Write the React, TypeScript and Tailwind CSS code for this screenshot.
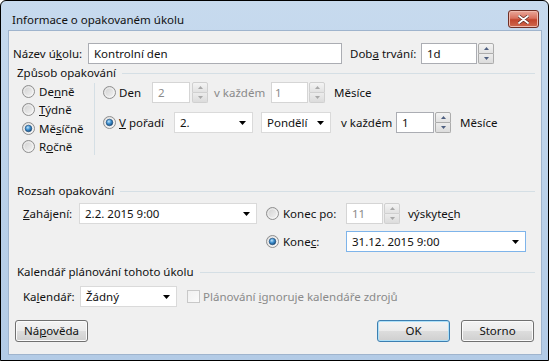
import React from "react";

const Radio = ({ checked }: { checked?: boolean }) => (
  <svg width="13" height="13" viewBox="0 0 13 13" className="shrink-0">
    <defs>
      <linearGradient id="rg" x1="0" y1="0" x2="1" y2="1">
        <stop offset="0" stopColor="#cdcdcd" />
        <stop offset="1" stopColor="#f7f7f7" />
      </linearGradient>
      <radialGradient id="rd" cx="0.4" cy="0.35" r="0.75">
        <stop offset="0" stopColor="#bfe4fb" />
        <stop offset="0.45" stopColor="#3d8fcf" />
        <stop offset="1" stopColor="#0f3c66" />
      </radialGradient>
    </defs>
    <circle cx="6.5" cy="6.5" r="6" fill="url(#rg)" stroke="#8f8f8f" />
    <circle cx="6.5" cy="6.5" r="4.6" fill="none" stroke="#ffffff" strokeOpacity="0.7" strokeWidth="0.8" />
    {checked && <circle cx="6.5" cy="6.5" r="3.3" fill="url(#rd)" stroke="#1b4a78" strokeWidth="0.6" />}
  </svg>
);

const Arrow = () => (
  <svg width="7" height="4" viewBox="0 0 7 4" className="shrink-0">
    <path d="M0 0 L7 0 L3.5 4 Z" fill="#000" />
  </svg>
);

const Spin = ({ disabled }: { disabled?: boolean }) => {
  const c = disabled ? "#a8a8a8" : "#4e5f80";
  const b = disabled ? "border-[#d0d0d0]" : "border-[#acacac]";
  return (
    <div className="flex flex-col w-[16px] h-[21px] shrink-0">
      <div className={`h-[11px] border ${b} rounded-t-[2px] bg-[linear-gradient(180deg,#f4f4f4,#e2e2e2)] flex items-center justify-center`}>
        <svg width="5" height="3" viewBox="0 0 5 3"><path d="M0 3 L2.5 0 L5 3 Z" fill={c} /></svg>
      </div>
      <div className={`h-[10px] border border-t-0 ${b} rounded-b-[2px] bg-[linear-gradient(180deg,#ececec,#dcdcdc)] flex items-center justify-center`}>
        <svg width="5" height="3" viewBox="0 0 5 3"><path d="M0 0 L5 0 L2.5 3 Z" fill={c} /></svg>
      </div>
    </div>
  );
};

const Select = ({ w, text, focus }: { w: string; text: string; focus?: boolean }) => (
  <div className={`${w} h-[21px] shrink-0 bg-white border ${focus ? "border-[#7eb4ea]" : "border-[#dadada]"} flex items-center pl-[5px] pr-[6px]`}>
    <span className="flex-1">{text}</span>
    <Arrow />
  </div>
);

const Header = ({ text }: { text: string }) => (
  <div className="h-[14px] flex items-center pl-[8px] pr-[6px]">
    <span className="whitespace-nowrap">{text}</span>
    <div className="flex-1 ml-[6px] border-t border-[#d5dfe5]" />
  </div>
);

const Btn = ({ children, def, ml }: { children: React.ReactNode; def?: boolean; ml?: string }) => (
  <div
    className={`${ml ?? ""} w-[73px] h-[22px] rounded-[3px] border ${def ? "border-[#3c7fb1] shadow-[inset_0_0_0_1px_#aee0f8]" : "border-[#707070] shadow-[inset_0_0_0_1px_#fbfbfb]"} bg-[linear-gradient(180deg,#f3f3f3_0%,#ebebeb_50%,#dddddd_50%,#cfcfcf_100%)] flex items-center justify-center`}
  >
    {children}
  </div>
);

export default function App() {
  return (
    <div
      className="w-[549px] h-[361px] border border-black rounded-t-[6px] flex flex-col bg-[linear-gradient(180deg,#c7daee_0%,#b9d0e9_60%,#b3cbe6_100%)] text-[11.5px] leading-none text-[#111] overflow-hidden"
      style={{ fontFamily: '"Segoe UI", "Noto Sans", "Open Sans", sans-serif' }}
    >
      {/* title bar */}
      <div className="h-[29px] flex items-start shrink-0">
        <div className="pl-[11px] pt-[13px] flex-1">Informace o opakovaném úkolu</div>
        <div className="mt-[9px] mr-[9px] w-[31px] h-[18px] rounded-[3px] border border-[#6f2f25] bg-[linear-gradient(180deg,#e9a89a_0%,#d9725f_45%,#c2442c_55%,#cf6a4f_100%)] shadow-[inset_0_0_0_1px_#f0b9ad] flex items-center justify-center">
          <svg width="11" height="9" viewBox="0 0 11 9">
            <path d="M1 1 L10 8 M10 1 L1 8" stroke="#5a2a22" strokeWidth="3.2" strokeLinecap="round" />
            <path d="M1 1 L10 8 M10 1 L1 8" stroke="#ffffff" strokeWidth="1.8" strokeLinecap="round" />
          </svg>
        </div>
      </div>

      <div className="flex flex-1">
        <div className="w-[7px] shrink-0" />
        {/* client */}
        <div className="w-[534px] h-[325px] border border-[#9fb4cd] bg-[#f0f0f0] flex flex-col">
          {/* row 1 */}
          <div className="mt-[12px] h-[21px] flex items-center pl-[4px]">
            <span className="w-[75px] shrink-0">
              Název ú<u>k</u>olu:
            </span>
            <div className="w-[254px] h-[21px] bg-white border border-[#abadb3] flex items-center pl-[5px]">Kontrolní den</div>
            <span className="ml-[8px] w-[71px] shrink-0">
              Dob<u>a</u> trvání:
            </span>
            <div className="w-[56px] h-[21px] bg-white border border-[#abadb3] flex items-center pl-[5px]">1d</div>
            <div className="ml-[1px]">
              <Spin />
            </div>
          </div>

          <div className="mt-[2px]">
            <Header text="Způsob opakování" />
          </div>

          {/* section 1 body */}
          <div className="h-[76px] flex">
            <div className="w-[85px] shrink-0 pl-[13px] pt-[2px] flex flex-col">
              {[
                ["De", "n", "ně", false],
                ["", "T", "ýdně", false],
                ["Mě", "s", "íčně", true],
                ["R", "o", "čně", false],
              ].map(([a, u, b, c], i) => (
                <div key={i} className="h-[19px] flex items-center">
                  <Radio checked={c as boolean} />
                  <span className="ml-[4px]">
                    {a as string}
                    <u>{u as string}</u>
                    {b as string}
                  </span>
                </div>
              ))}
            </div>
            <div className="w-px mt-[3px] h-[72px] bg-[#d5dfe5]" />
            <div className="flex flex-col pl-[8px] pt-[2px]">
              <div className="h-[21px] flex items-center">
                <div className="w-[49px] shrink-0 flex items-center">
                  <Radio />
                  <span className="ml-[3px]">Den</span>
                </div>
                <div className="w-[38px] h-[21px] bg-white border border-[#d5d5d5] flex items-center pl-[5px] text-[#8a8a8a]">2</div>
                <div className="ml-[2px]">
                  <Spin disabled />
                </div>
                <span className="ml-[6px] w-[57px] shrink-0 text-[#8a8a8a]">v každém</span>
                <div className="w-[37px] h-[21px] bg-white border border-[#d5d5d5] flex items-center pl-[3px] text-[#8a8a8a]">1</div>
                <div className="ml-[1px]">
                  <Spin disabled />
                </div>
                <span className="ml-[9px]">Měsíce</span>
              </div>
              <div className="mt-[9px] h-[21px] flex items-center">
                <div className="w-[71px] shrink-0 flex items-center">
                  <Radio checked />
                  <span className="ml-[3px]">
                    <u>V</u> pořadí
                  </span>
                </div>
                <Select w="w-[79px]" text="2." />
                <div className="ml-[8px]">
                  <Select w="w-[70px]" text="Pondělí" />
                </div>
                <span className="ml-[10px] w-[55px] shrink-0">v každém</span>
                <div className="w-[38px] h-[21px] bg-white border border-[#abadb3] flex items-center pl-[5px]">1</div>
                <div className="ml-[1px]">
                  <Spin />
                </div>
                <span className="ml-[9px]">Měsíce</span>
              </div>
            </div>
          </div>

          <div className="mt-[28px]">
            <Header text="Rozsah opakování" />
          </div>

          <div className="mt-[5px] h-[21px] flex items-center pl-[14px]">
            <span className="w-[56px] shrink-0">
              <u>Z</u>ahájení:
            </span>
            <Select w="w-[178px]" text="2.2. 2015 9:00" />
            <div className="ml-[9px] w-[80px] shrink-0 flex items-center">
              <Radio />
              <span className="ml-[4px]">Konec po:</span>
            </div>
            <div className="w-[37px] h-[21px] bg-white border border-[#d5d5d5] flex items-center pl-[5px] text-[#8a8a8a]">11</div>
            <div className="ml-[1px]">
              <Spin disabled />
            </div>
            <span className="ml-[8px]">
              výskyte<u>c</u>h
            </span>
          </div>
          <div className="mt-[7px] h-[21px] flex items-center pl-[257px]">
            <div className="w-[80px] shrink-0 flex items-center">
              <Radio checked />
              <span className="ml-[4px]">
                Kone<u>c</u>:
              </span>
            </div>
            <Select w="w-[180px]" text="31.12. 2015 9:00" focus />
          </div>

          <div className="mt-[13px]">
            <Header text="Kalendář plánování tohoto úkolu" />
          </div>

          <div className="mt-[7px] h-[21px] flex items-center pl-[14px]">
            <span className="w-[57px] shrink-0">
              Ka<u>l</u>endář:
            </span>
            <Select w="w-[97px]" text="Žádný" />
            <div className="ml-[10px] w-[13px] h-[13px] border border-[#c8c8c8] bg-[linear-gradient(135deg,#f0f0f0,#fafafa)]" />
            <span className="ml-[3px] text-[#8a8a8a]">
              Plánování <u>i</u>gnoruje kalendáře zdrojů
            </span>
          </div>

          <div className="mt-[13px] flex items-center pl-[6px] pr-[7px]">
            <Btn>
              <span>
                Ná<u>p</u>ověda
              </span>
            </Btn>
            <div className="flex-1" />
            <Btn def>OK</Btn>
            <Btn ml="ml-[11px]">Storno</Btn>
          </div>
        </div>
        <div className="w-[6px] shrink-0" />
      </div>
      <div className="h-[5px] shrink-0" />
    </div>
  );
}
